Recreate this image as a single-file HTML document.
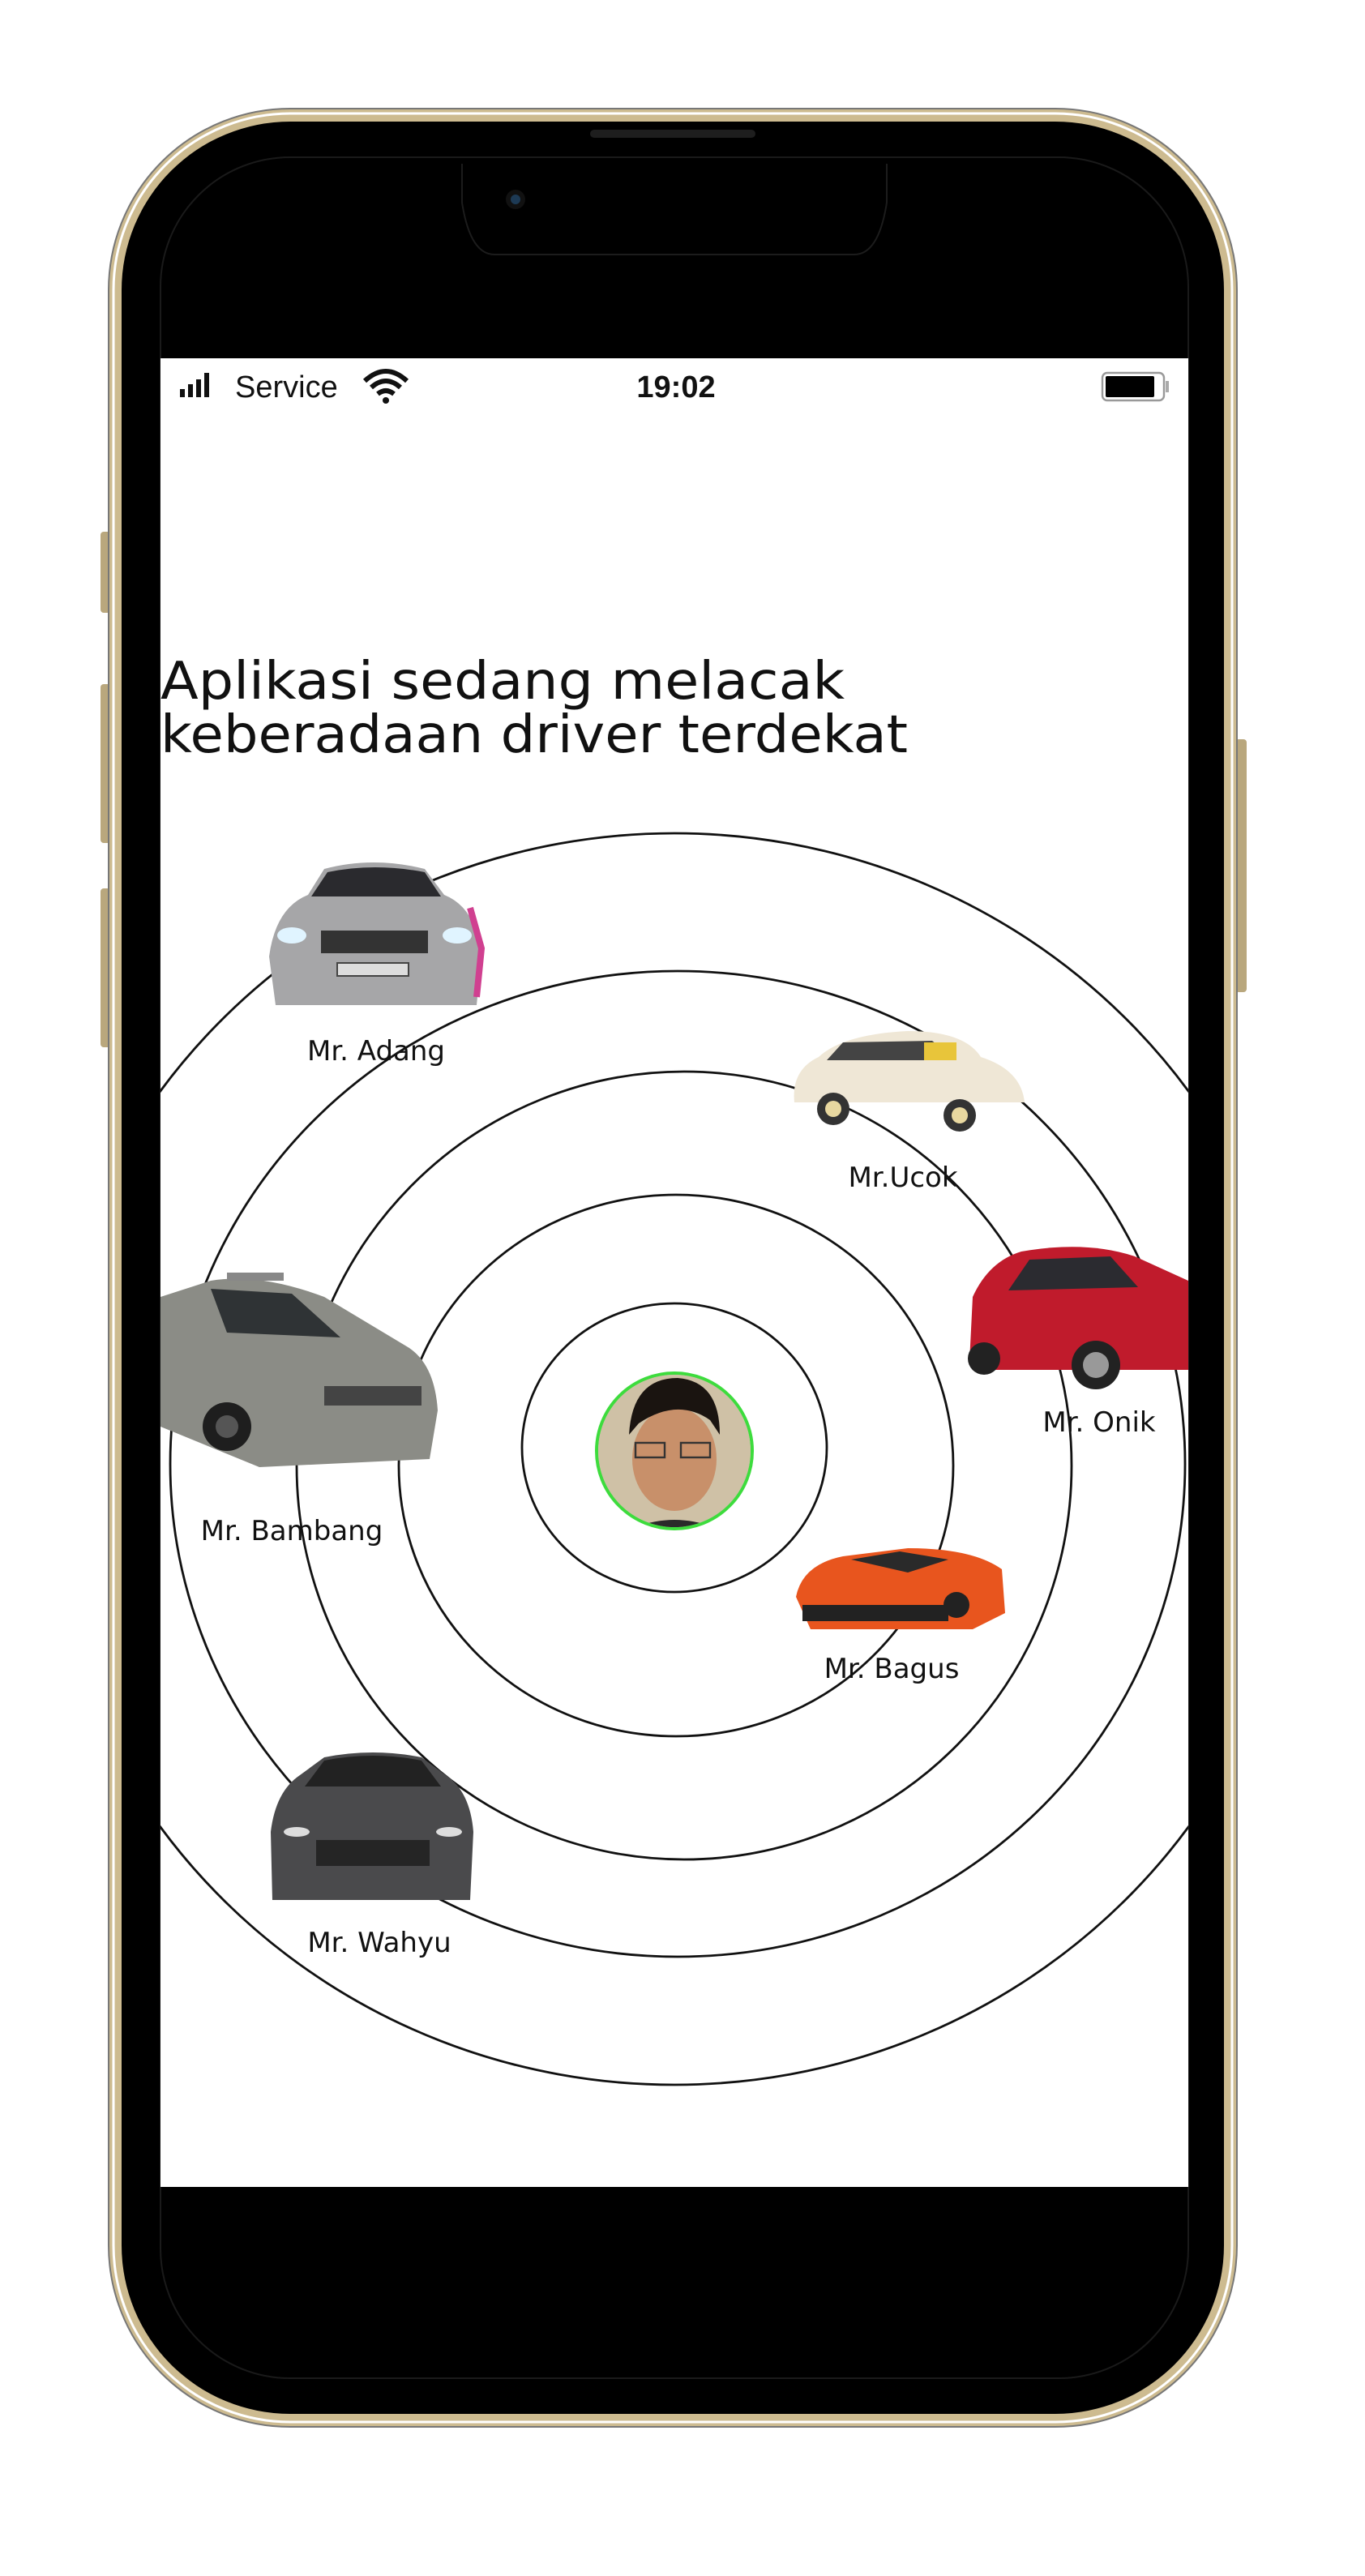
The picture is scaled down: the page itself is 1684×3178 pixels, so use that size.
<!DOCTYPE html>
<html><head><meta charset="utf-8"><style>
html,body{margin:0;padding:0;background:#fff;width:1684px;height:3178px;overflow:hidden}
svg{display:block}
text{font-family:"DejaVu Sans","Liberation Sans",sans-serif}
</style></head><body>
<svg width="1684" height="3178" viewBox="0 0 842 1589" xmlns="http://www.w3.org/2000/svg">
<defs><clipPath id="scr"><rect x="99" y="221" width="634" height="1128"/></clipPath>
<clipPath id="av"><circle cx="416" cy="895" r="47"/></clipPath></defs>
<rect x="62" y="328" width="7" height="50" rx="2" fill="#b9a77d"/>
<rect x="62" y="422" width="7" height="98" rx="2" fill="#b9a77d"/>
<rect x="62" y="548" width="7" height="98" rx="2" fill="#b9a77d"/>
<rect x="762" y="456" width="7" height="156" rx="2" fill="#b9a77d"/>
<rect x="67" y="67" width="696" height="1430" rx="112" fill="#cdbb90" stroke="#777" stroke-width="1"/>
<rect x="70" y="70" width="690" height="1424" rx="109" fill="none" stroke="#fff" stroke-width="1.5"/>
<rect x="75" y="75" width="680" height="1414" rx="104" fill="#000"/>
<rect x="99" y="97" width="634" height="1370" rx="80" fill="none" stroke="#1a1a1a" stroke-width="1"/>
<rect x="364" y="80" width="102" height="5" rx="2.5" fill="#1e1e1e"/>
<path d="M285 101 L285 125 Q290 157 305 157 L527 157 Q542 157 547 125 L547 101" fill="none" stroke="#1c1c1c" stroke-width="1"/>
<circle cx="318" cy="123" r="6" fill="#111"/><circle cx="318" cy="123" r="3" fill="#1d3a55"/>
<rect x="99" y="221" width="634" height="1128" fill="#fff"/>
<rect x="111" y="240" width="3" height="5" fill="#111"/><rect x="116" y="237" width="3" height="8" fill="#111"/><rect x="121" y="234" width="3" height="11" fill="#111"/><rect x="126" y="230" width="3" height="15" fill="#111"/>
<text x="145" y="245" font-size="19" fill="#111" style="font-family:'Liberation Sans',sans-serif">Service</text>
<path d="M225 235 Q238 223 251 235 M229 239 Q238 231 247 239 M233 243 Q238 239 243 243" fill="none" stroke="#111" stroke-width="3"/>
<circle cx="238" cy="247" r="2" fill="#111"/>
<text x="417" y="245" font-size="19" font-weight="bold" fill="#111" text-anchor="middle" style="font-family:'Liberation Sans',sans-serif">19:02</text>
<rect x="680" y="230" width="38" height="17" rx="3" fill="#fff" stroke="#999" stroke-width="1.2"/>
<rect x="682" y="232" width="30" height="13" rx="1" fill="#000"/>
<rect x="719" y="235" width="2" height="7" fill="#aaa"/>
<text x="99" y="431" font-size="32" fill="#111" textLength="422" lengthAdjust="spacingAndGlyphs">Aplikasi sedang melacak</text>
<text x="99" y="464" font-size="32" fill="#111" textLength="461" lengthAdjust="spacingAndGlyphs">keberadaan driver terdekat</text>
<g clip-path="url(#scr)" fill="none" stroke="#111" stroke-width="1.4">
<ellipse cx="416" cy="893" rx="94" ry="89"/>
<ellipse cx="417" cy="904" rx="171" ry="167"/>
<ellipse cx="422" cy="904" rx="239" ry="243"/>
<ellipse cx="418" cy="903" rx="313" ry="304"/>
<ellipse cx="416" cy="900" rx="392" ry="386"/>
</g>
<circle cx="416" cy="895" r="48" fill="#d8c9b0" stroke="#3ddc3d" stroke-width="2"/>
<g clip-path="url(#av)">
<rect x="366" y="845" width="100" height="100" fill="#cfc1a6"/>
<ellipse cx="416" cy="900" rx="26" ry="32" fill="#c8906a"/>
<path d="M388 885 Q390 850 418 850 Q444 852 444 885 L438 876 Q418 862 394 878 Z" fill="#1a1410"/>
<rect x="392" y="890" width="18" height="9" fill="none" stroke="#333" stroke-width="1.2"/><rect x="420" y="890" width="18" height="9" fill="none" stroke="#333" stroke-width="1.2"/>
<path d="M376 950 Q416 925 456 950 Z" fill="#2a2a2a"/>
</g>
<g clip-path="url(#scr)">
<path d="M166 590 Q170 560 190 552 L200 536 Q230 528 262 536 L274 552 Q294 560 297 590 L294 620 L170 620 Z" fill="#a6a6a8"/>
<path d="M192 553 L202 538 Q231 532 262 538 L272 553 Z" fill="#2a2a2e"/>
<rect x="198" y="574" width="66" height="14" fill="#333"/><rect x="208" y="594" width="44" height="8" fill="#ddd" stroke="#444"/>
<ellipse cx="180" cy="577" rx="9" ry="5" fill="#e0f4ff"/><ellipse cx="282" cy="577" rx="9" ry="5" fill="#e0f4ff"/>
<path d="M290 560 L297 585 L294 615" stroke="#d04090" stroke-width="4" fill="none"/>
<path d="M490 680 Q488 660 505 652 Q520 638 560 636 Q595 636 605 652 Q630 660 632 680 Z" fill="#efe7d6"/>
<path d="M510 654 L520 643 L575 642 L590 654 Z" fill="#444"/><rect x="570" y="643" width="20" height="11" fill="#e8c53a"/>
<circle cx="514" cy="684" r="10" fill="#333"/><circle cx="514" cy="684" r="5" fill="#e8d8a0"/>
<circle cx="592" cy="688" r="10" fill="#333"/><circle cx="592" cy="688" r="5" fill="#e8d8a0"/>
<path d="M598 840 L600 800 Q610 778 630 772 Q670 765 700 775 L733 790 L733 845 L600 845 Z" fill="#c01b2c"/>
<path d="M622 796 L635 777 L685 775 L702 794 Z" fill="#2b2b30"/>
<circle cx="607" cy="838" r="10" fill="#222"/><circle cx="676" cy="842" r="15" fill="#222"/><circle cx="676" cy="842" r="8" fill="#999"/>
<path d="M99 800 L130 790 Q160 785 200 800 L250 830 Q268 840 270 870 L265 900 L160 905 L99 880 Z" fill="#8b8c86"/>
<path d="M130 795 L180 798 L210 825 L140 822 Z" fill="#2f3335"/>
<rect x="140" y="785" width="35" height="5" fill="#888"/>
<circle cx="140" cy="880" r="15" fill="#1e1e1e"/><circle cx="140" cy="880" r="7" fill="#555"/>
<rect x="200" y="855" width="60" height="12" fill="#444"/>
<path d="M491 985 Q495 965 520 960 L560 955 Q600 955 618 968 L620 995 L600 1005 L500 1005 Z" fill="#e8551e"/>
<path d="M525 962 L555 957 L585 962 L560 970 Z" fill="#2a2a2a"/>
<rect x="495" y="990" width="90" height="10" fill="#222"/><circle cx="590" cy="990" r="8" fill="#222"/>
<path d="M167 1130 Q170 1105 185 1095 L200 1084 Q230 1078 260 1084 L275 1095 Q290 1105 292 1130 L290 1172 L168 1172 Z" fill="#4a4a4c"/>
<path d="M200 1086 Q230 1080 260 1086 L272 1102 L188 1102 Z" fill="#222"/>
<rect x="195" y="1135" width="70" height="16" fill="#252525"/>
<ellipse cx="183" cy="1130" rx="8" ry="3" fill="#ddd"/><ellipse cx="277" cy="1130" rx="8" ry="3" fill="#ddd"/>
</g>
<g font-size="17" fill="#111" text-anchor="middle">
<text x="232" y="654">Mr. Adang</text>
<text x="557" y="732">Mr.Ucok</text>
<text x="678" y="883">Mr. Onik</text>
<text x="180" y="950">Mr. Bambang</text>
<text x="550" y="1035">Mr. Bagus</text>
<text x="234" y="1204">Mr. Wahyu</text>
</g>
</svg>
</body></html>
